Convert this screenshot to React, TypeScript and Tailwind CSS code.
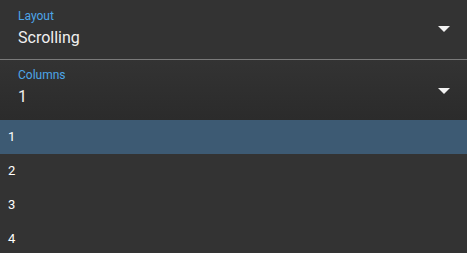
import React from "react";

function Arrow({ className = "" }: { className?: string }) {
  return (
    <svg width="12" height="6" viewBox="0 0 12 6" className={`shrink-0 ${className}`}>
      <path d="M0 0 L12 0 L6 6 Z" fill="#f2f2f2" />
    </svg>
  );
}

export default function App() {
  const items = ["1", "2", "3", "4"];
  return (
    <div className="w-[467px] h-[253px] bg-[#333333] overflow-hidden" style={{ fontFamily: "Roboto, 'Liberation Sans', sans-serif" }}>
      <div className="h-[59px] flex items-center justify-between pl-[18px] pr-[17px]">
        <div className="flex flex-col pb-[3px]">
          <span className="text-[12px] leading-[14px] text-[#4da6e8]">Layout</span>
          <span className="text-[16px] leading-[20px] mt-[5px] text-[#f0f0f0]">Scrolling</span>
        </div>
        <Arrow className="mt-[-1px]" />
      </div>
      <div className="h-px bg-[#7a7a7a]" />
      <div className="h-[60px] flex items-center justify-between pl-[18px] pr-[17px] bg-gradient-to-b from-[#333333] to-[#2b2b2b]">
        <div className="flex flex-col pb-[5px]">
          <span className="text-[12px] leading-[14px] text-[#4da6e8]">Columns</span>
          <span className="text-[16px] leading-[20px] mt-[5px] text-[#f0f0f0]">1</span>
        </div>
        <Arrow className="mt-[2px]" />
      </div>
      <div className="flex flex-col">
        {items.map((it, i) => (
          <div
            key={it}
            className={`h-[34px] flex items-center pl-[8px] text-[13px] text-white ${i === 0 ? "bg-[#3d5a73]" : "bg-[#333333]"}`}
          >
            {it}
          </div>
        ))}
      </div>
    </div>
  );
}
